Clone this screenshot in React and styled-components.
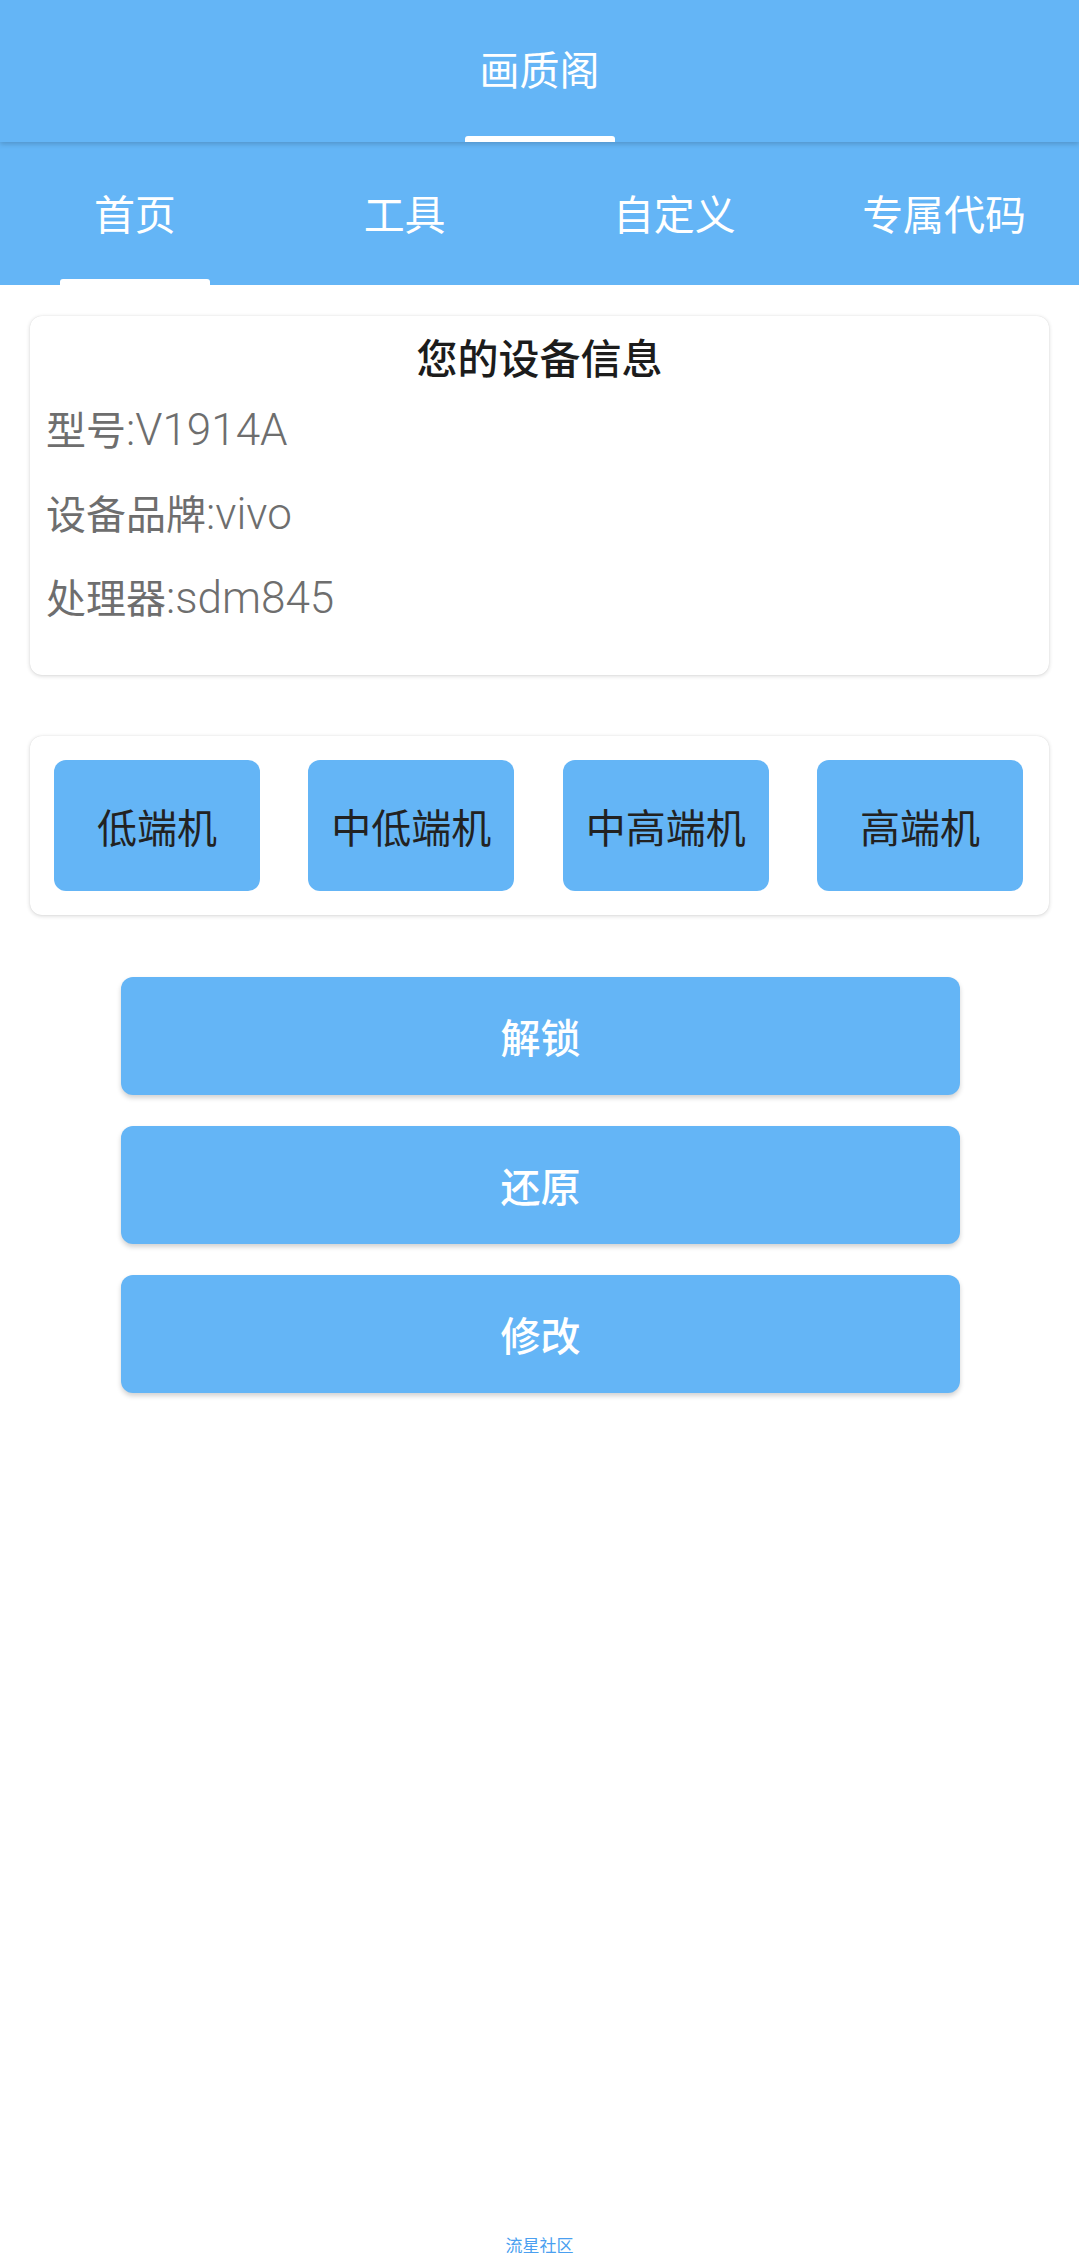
import React, { useState } from 'react';
import styled, { createGlobalStyle } from 'styled-components';

const GlobalStyle = createGlobalStyle`
  html, body {
    margin: 0;
    padding: 0;
    background: #ffffff;
  }
  body {
    font-family: Roboto, "Noto Sans CJK SC", "Noto Sans", sans-serif;
  }
`;

const BLUE = '#64b5f6';

const Page = styled.div`
  display: flex;
  flex-direction: column;
  min-height: 100vh;
  overflow: hidden;
`;

const TopBar = styled.header`
  position: relative;
  z-index: 2;
  display: flex;
  flex-direction: column;
  align-items: center;
  justify-content: space-between;
  height: 142px;
  background: ${BLUE};
  box-shadow: 0 2px 5px rgba(0, 0, 0, 0.18);
`;

const Title = styled.div`
  margin-top: 48px;
  color: #ffffff;
  font-size: 40px;
  line-height: 48px;
`;

const Indicator = styled.div`
  width: 150px;
  height: 6px;
  border-radius: 3px 3px 0 0;
  background: #ffffff;
  visibility: ${(p) => (p.$active ? 'visible' : 'hidden')};
`;

const TabBar = styled.nav`
  display: grid;
  grid-template-columns: repeat(4, 1fr);
  height: 143px;
  background: ${BLUE};
`;

const Tab = styled.button`
  display: flex;
  flex-direction: column;
  align-items: center;
  justify-content: space-between;
  padding: 0;
  border: none;
  background: transparent;
  color: #ffffff;
  font-family: inherit;
  font-size: 41px;
  cursor: pointer;
`;

const TabLabel = styled.span`
  margin-top: 50px;
  line-height: 48px;
`;

const Card = styled.section`
  margin: ${(p) => p.$top}px 30px 0;
  padding: ${(p) => p.$padding};
  background: #ffffff;
  border-radius: 12px;
  box-shadow: 0 1px 4px rgba(0, 0, 0, 0.16), 0 0 1px rgba(0, 0, 0, 0.12);
`;

const CardTitle = styled.h2`
  margin: 0;
  text-align: center;
  color: #1c1c1c;
  font-size: 41px;
  font-weight: 500;
  line-height: 60px;
`;

const InfoRow = styled.div`
  height: 84px;
  color: #6e6e6e;
  font-size: 40px;
  line-height: 84px;
`;

const InfoValue = styled.span`
  font-size: 44px;
  font-weight: 300;
  line-height: 1;
`;

const TierRow = styled.div`
  display: flex;
  justify-content: space-between;
`;

const TierButton = styled.button`
  width: 206px;
  height: 131px;
  padding: 0;
  border: none;
  border-radius: 12px;
  background: ${BLUE};
  color: #222222;
  font-family: inherit;
  font-size: 40px;
  cursor: pointer;
`;

const Actions = styled.div`
  display: flex;
  flex-direction: column;
  gap: 31px;
  margin: 62px 119px 0 121px;
`;

const ActionButton = styled.button`
  height: 118px;
  border: none;
  border-radius: 12px;
  background: ${BLUE};
  color: #ffffff;
  font-family: inherit;
  font-size: 40px;
  font-weight: 500;
  box-shadow: 0 3px 5px rgba(0, 0, 0, 0.18);
  cursor: pointer;
`;

const Footer = styled.footer`
  margin-top: auto;
  height: 16px;
  overflow: hidden;
  text-align: center;
  color: #4a9ff0;
  font-size: 17px;
  line-height: 18px;
`;

const tabs = ['首页', '工具', '自定义', '专属代码'];
const info = [
  ['型号', 'V1914A'],
  ['设备品牌', 'vivo'],
  ['处理器', 'sdm845'],
];
const tiers = ['低端机', '中低端机', '中高端机', '高端机'];
const actions = ['解锁', '还原', '修改'];

export default function App() {
  const [active, setActive] = useState(0);

  return (
    <Page>
      <GlobalStyle />
      <TopBar>
        <Title>画质阁</Title>
        <Indicator $active />
      </TopBar>
      <TabBar>
        {tabs.map((t, i) => (
          <Tab key={t} onClick={() => setActive(i)}>
            <TabLabel>{t}</TabLabel>
            <Indicator $active={active === i} />
          </Tab>
        ))}
      </TabBar>

      <Card $top={31} $padding="14px 16px 33px">
        <CardTitle>您的设备信息</CardTitle>
        {info.map(([label, value]) => (
          <InfoRow key={label}>
            {label}
            <InfoValue>:{value}</InfoValue>
          </InfoRow>
        ))}
      </Card>

      <Card $top={61} $padding="24px 26px 24px 24px">
        <TierRow>
          {tiers.map((t) => (
            <TierButton key={t}>{t}</TierButton>
          ))}
        </TierRow>
      </Card>

      <Actions>
        {actions.map((a) => (
          <ActionButton key={a}>{a}</ActionButton>
        ))}
      </Actions>

      <Footer>流星社区</Footer>
    </Page>
  );
}
